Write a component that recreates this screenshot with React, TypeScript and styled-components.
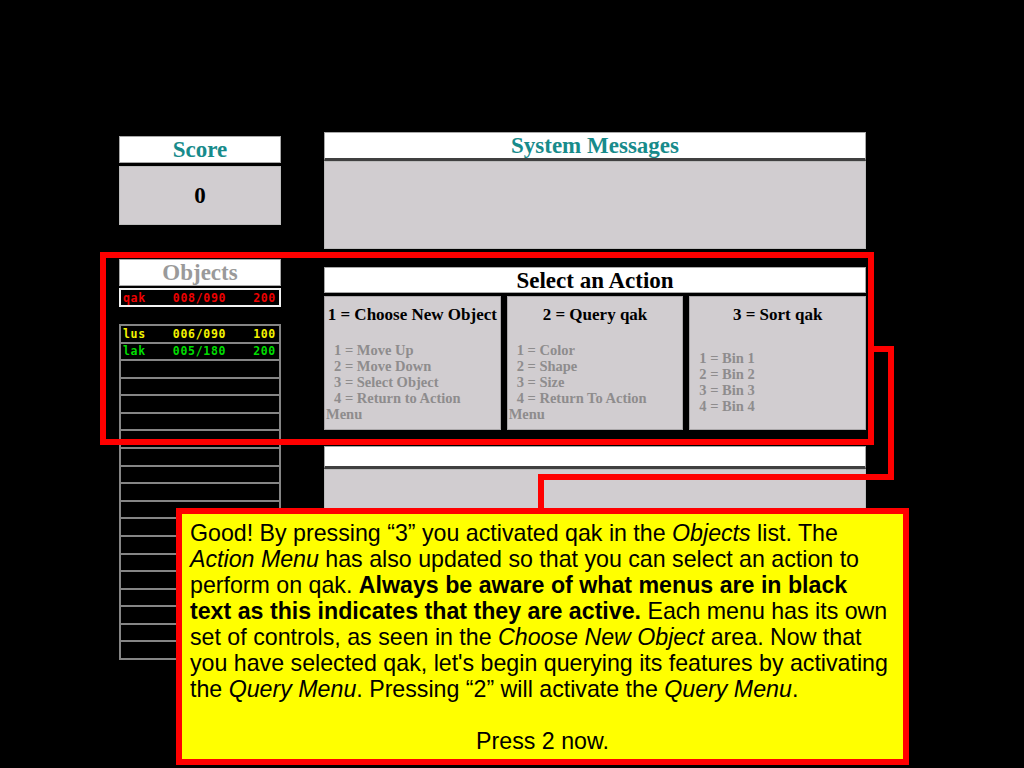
import styled, { createGlobalStyle } from 'styled-components'

const objects = [
  { name: 'lus', pos: '006/090', pts: '100', color: '#f4f400' },
  { name: 'lak', pos: '005/180', pts: '200', color: '#00dc00' },
]

const EMPTY_ROWS = 17

const actions = [
  {
    title: '1 = Choose New Object',
    items: ['1 = Move Up', '2 = Move Down', '3 = Select Object', '4 = Return to Action'],
    tail: 'Menu',
    offset: 18,
  },
  {
    title: '2 = Query qak',
    items: ['1 = Color', '2 = Shape', '3 = Size', '4 = Return To Action'],
    tail: 'Menu',
    offset: 18,
  },
  {
    title: '3 = Sort qak',
    items: ['1 = Bin 1', '2 = Bin 2', '3 = Bin 3', '4 = Bin 4'],
    tail: '',
    offset: 26,
  },
]

const GlobalStyle = createGlobalStyle`
  html, body {
    margin: 0;
    padding: 0;
    background: #000;
    overflow: hidden;
  }
`

const Page = styled.div`
  position: relative;
  width: 1024px;
  height: 768px;
  overflow: hidden;
  background: #000;
  box-sizing: border-box;
  padding: 132px 0 0 119px;
  display: flex;
  align-items: flex-start;
  gap: 43px;
  font-family: 'Liberation Serif', 'Times New Roman', serif;
`

const LeftColumn = styled.div`
  width: 162px;
  margin-top: 4px;
  display: flex;
  flex-direction: column;
`

const RightColumn = styled.div`
  width: 542px;
  display: flex;
  flex-direction: column;
`

const Header = styled.div<{ $color: string; $height?: number; $rule?: boolean }>`
  height: ${(p) => p.$height ?? 27}px;
  box-sizing: border-box;
  background: #fff;
  border: 1px solid #a8a8a8;
  border-bottom: ${(p) => (p.$rule ? '3px solid #404040' : '1px solid #a8a8a8')};
  color: ${(p) => p.$color};
  font-size: 23px;
  font-weight: bold;
  line-height: 25px;
  text-align: center;
`

const GreyBox = styled.div<{ $height: number; $mt?: number }>`
  height: ${(p) => p.$height}px;
  margin-top: ${(p) => p.$mt ?? 0}px;
  box-sizing: border-box;
  background: #d1cdd0;
  border: 1px solid #bcbcbc;
  display: flex;
  align-items: center;
  justify-content: center;
  font-size: 23px;
  font-weight: bold;
  color: #000;
`

const Spacer = styled.div<{ $h: number }>`
  height: ${(p) => p.$h}px;
`

const ActiveRow = styled.div`
  height: 19px;
  margin-top: 2px;
  box-sizing: border-box;
  border: 2px solid #f2f2f2;
  background: #000;
  padding: 0 3px 0 2px;
  display: flex;
  align-items: center;
  justify-content: space-between;
`

const ObjectGrid = styled.div`
  margin-top: 17px;
  height: 336px;
  box-sizing: border-box;
  padding: 2px;
  background: #858585;
  display: grid;
  grid-template-rows: repeat(19, 1fr);
  gap: 2px;
`

const ObjectRow = styled.div`
  background: #000;
  padding: 0 3px 0 2px;
  display: flex;
  align-items: center;
  justify-content: space-between;
`

const Cell = styled.span<{ $color: string }>`
  font-family: 'DejaVu Sans Mono', 'Liberation Mono', monospace;
  font-size: 11.5px;
  font-weight: bold;
  letter-spacing: 0.7px;
  line-height: 12px;
  color: ${(p) => p.$color};
`

const PanelRow = styled.div`
  margin-top: 3px;
  height: 134px;
  display: grid;
  grid-template-columns: repeat(3, 1fr);
  gap: 6px;
`

const Panel = styled.div`
  box-sizing: border-box;
  background: #d1cdd0;
  border: 1px solid #aaa7a9;
  padding: 9px 1px 0;
`

const PanelTitle = styled.div`
  font-size: 17px;
  font-weight: bold;
  line-height: 18px;
  text-align: center;
  color: #000;
  white-space: nowrap;
`

const ItemList = styled.div<{ $offset: number }>`
  margin-top: ${(p) => p.$offset}px;
  font-size: 14.5px;
  font-weight: bold;
  line-height: 16px;
  color: #8e8c8d;
`

const Item = styled.div<{ $indent: boolean }>`
  padding-left: ${(p) => (p.$indent ? 8 : 0)}px;
  white-space: nowrap;
`

const Highlight = styled.div`
  position: absolute;
  left: 100px;
  top: 252px;
  width: 774px;
  height: 193px;
  box-sizing: border-box;
  border: 6px solid #ff0000;
  pointer-events: none;
`

const Connector = styled.svg`
  position: absolute;
  left: 0;
  top: 0;
  width: 1024px;
  height: 768px;
  pointer-events: none;
`

const Callout = styled.div`
  position: absolute;
  left: 176px;
  top: 508px;
  width: 733px;
  height: 257px;
  box-sizing: border-box;
  border: 6px solid #ff0000;
  background: #ffff00;
  padding: 6px 0 0 8px;
  font-family: 'Liberation Sans', Arial, sans-serif;
  font-size: 23.2px;
  line-height: 26px;
  color: #000;
`

const CalloutText = styled.p`
  margin: 0;
  white-space: nowrap;
`

const CalloutPrompt = styled.p`
  margin: 26px 0 0 -8px;
  text-align: center;
`

export default function App() {
  return (
    <>
      <GlobalStyle />
      <Page>
        <LeftColumn>
          <Header $color="#178b8b">Score</Header>
          <GreyBox $height={59} $mt={3}>0</GreyBox>
          <Spacer $h={34} />
          <Header $color="#9a9a9a">Objects</Header>
          <ActiveRow>
            <Cell $color="#ee0000">qak</Cell>
            <Cell $color="#ee0000">008/090</Cell>
            <Cell $color="#ee0000">200</Cell>
          </ActiveRow>
          <ObjectGrid>
            {objects.map((o) => (
              <ObjectRow key={o.name}>
                <Cell $color={o.color}>{o.name}</Cell>
                <Cell $color={o.color}>{o.pos}</Cell>
                <Cell $color={o.color}>{o.pts}</Cell>
              </ObjectRow>
            ))}
            {Array.from({ length: EMPTY_ROWS }, (_, i) => (
              <ObjectRow key={i} />
            ))}
          </ObjectGrid>
        </LeftColumn>

        <RightColumn>
          <Header $color="#178b8b" $height={29} $rule>System Messages</Header>
          <GreyBox $height={88} />
          <Spacer $h={18} />
          <Header $color="#000" $height={26}>Select an Action</Header>
          <PanelRow>
            {actions.map((a) => (
              <Panel key={a.title}>
                <PanelTitle>{a.title}</PanelTitle>
                <ItemList $offset={a.offset}>
                  {a.items.map((it) => (
                    <Item key={it} $indent>{it}</Item>
                  ))}
                  {a.tail && <Item $indent={false}>{a.tail}</Item>}
                </ItemList>
              </Panel>
            ))}
          </PanelRow>
          <Spacer $h={16} />
          <Header $color="#000" $height={23} $rule />
          <GreyBox $height={120} />
        </RightColumn>

        <Highlight />
        <Connector viewBox="0 0 1024 768">
          <polyline
            points="871,349 891,349 891,477 541,477 541,511"
            fill="none"
            stroke="#ff0000"
            strokeWidth="6"
            strokeLinejoin="miter"
          />
        </Connector>

        <Callout>
          <CalloutText>
            Good! By pressing “3” you activated qak in the <i>Objects</i> list. The
            <br />
            <i>Action Menu</i> has also updated so that you can select an action to
            <br />
            perform on qak. <b>Always be aware of what menus are in black</b>
            <br />
            <b>text as this indicates that they are active.</b> Each menu has its own
            <br />
            set of controls, as seen in the <i>Choose New Object</i> area. Now that
            <br />
            you have selected qak, let's begin querying its features by activating
            <br />
            the <i>Query Menu</i>. Pressing “2” will activate the <i>Query Menu</i>.
          </CalloutText>
          <CalloutPrompt>Press 2 now.</CalloutPrompt>
        </Callout>
      </Page>
    </>
  )
}
